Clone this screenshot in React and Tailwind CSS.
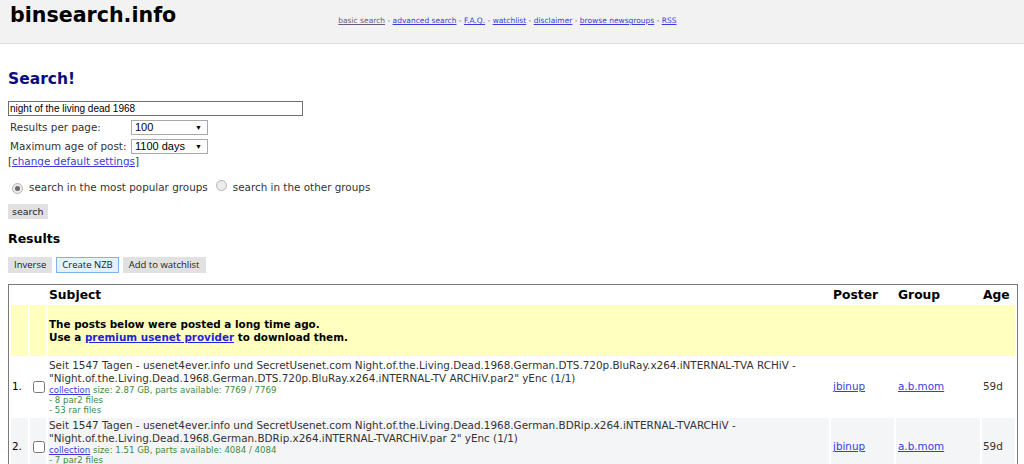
import React from 'react';

const navLinks = ['advanced search', 'F.A.Q.', 'watchlist', 'disclaimer', 'browse newsgroups', 'RSS'];

const results = [
  {
    n: '1.',
    line1: 'Seit 1547 Tagen - usenet4ever.info und SecretUsenet.com Night.of.the.Living.Dead.1968.German.DTS.720p.BluRay.x264.iNTERNAL-TVA RCHiV -',
    line2: '"Night.of.the.Living.Dead.1968.German.DTS.720p.BluRay.x264.iNTERNAL-TV ARCHiV.par2" yEnc (1/1)',
    size: 'size: 2.87 GB, parts available: 7769 / 7769',
    extra: ['- 8 par2 files', '- 53 rar files'],
    bg: 'bg-white',
  },
  {
    n: '2.',
    line1: 'Seit 1547 Tagen - usenet4ever.info und SecretUsenet.com Night.of.the.Living.Dead.1968.German.BDRip.x264.iNTERNAL-TVARCHiV -',
    line2: '"Night.of.the.Living.Dead.1968.German.BDRip.x264.iNTERNAL-TVARCHiV.par 2" yEnc (1/1)',
    size: 'size: 1.51 GB, parts available: 4084 / 4084',
    extra: ['- 7 par2 files', '- 40 rar files'],
    bg: 'bg-[#f4f5f7]',
  },
];

const Radio = ({ checked }) => (
  <span className="inline-flex items-center justify-center w-[11px] h-[11px] rounded-full border border-[#b4b4b4] bg-[#ececec]">
    {checked && <span className="w-[5px] h-[5px] rounded-full bg-[#6a6a6a]" />}
  </span>
);

const Select = ({ value }) => (
  <div className="flex items-center justify-between w-[77px] h-[15px] border border-[#a9a9a9] bg-white pl-[3px] pr-[5px] font-['Liberation_Sans',sans-serif] text-[11px] text-black leading-none">
    <span>{value}</span>
    <span className="text-[7px]">▼</span>
  </div>
);

const GreyButton = ({ children, active }) => (
  <button
    className={
      active
        ? "h-[16px] px-[5px] border border-[#7eb4ea] bg-[#e5f1fb] font-['Open_Sans',sans-serif] text-[9.5px] leading-none text-[#222]"
        : "h-[16px] px-[5px] border border-[#e1e1e1] bg-[#e1e1e1] font-['Open_Sans',sans-serif] text-[9.5px] leading-none text-[#222]"
    }
  >
    {children}
  </button>
);

const App = () => {
  return (
    <div className="w-[1024px] h-[464px] overflow-hidden bg-white font-['DejaVu_Sans',sans-serif] text-[#333]">
      {/* header bar */}
      <div className="flex items-start h-[44px] bg-[#f2f2f2] border-b border-[#dcdcdc]">
        <div className="pl-[10px] pt-[1px] text-[20.6px] font-bold text-black leading-[28px]">binsearch.info</div>
        <div className="ml-[162px] pt-[16px] text-[7.5px] leading-[10px] text-[#555]">
          <a className="underline text-[#6b5b7b]">basic search</a>
          {navLinks.map((l) => (
            <span key={l}>
              {' - '}
              <a className="underline text-[#3b3bdc]">{l}</a>
            </span>
          ))}
        </div>
      </div>

      <div className="px-[8px]">
        <h1 className="mt-[25px] text-[15.5px] font-bold text-[#0a0a80] leading-[20px]">Search!</h1>

        <div className="mt-[12px] w-[295px] h-[15px] border border-[#6f6f6f] pl-[1px] font-['Liberation_Sans',sans-serif] text-[10px] leading-[13px] text-black">
          night of the living dead 1968
        </div>

        <div className="mt-[4px] flex items-center text-[10.4px] leading-[15px]">
          <span className="w-[123px] pl-[2px]">Results per page:</span>
          <Select value="100" />
        </div>
        <div className="mt-[4px] flex items-center text-[10.4px] leading-[15px]">
          <span className="w-[123px] pl-[2px]">Maximum age of post:</span>
          <Select value="1100 days" />
        </div>
        <div className="text-[10.4px] leading-[14px]">
          [<a className="underline text-[#3b3bdc]">change default settings</a>]
        </div>

        <div className="mt-[12px] flex items-center text-[10.4px] leading-[14px]">
          <span className="ml-[4px] mr-[6px]"><Radio checked /></span>
          <span>search in the most popular groups</span>
          <span className="ml-[8px] mr-[6px]"><Radio /></span>
          <span>search in the other groups</span>
        </div>

        <button className="mt-[10px] h-[15px] px-[4px] bg-[#e1e1e1] text-[9.5px] leading-none text-[#222]">search</button>

        <h2 className="mt-[9px] text-[12.5px] font-bold text-black leading-[16px]">Results</h2>

        <div className="mt-[10px] flex gap-[4px]">
          <GreyButton>Inverse</GreyButton>
          <GreyButton active>Create NZB</GreyButton>
          <GreyButton>Add to watchlist</GreyButton>
        </div>

        <table className="mt-[11px] w-[1010px] border border-[#7a7a7a] border-separate border-spacing-[2px] text-[10.4px] leading-[13px]">
          <thead>
            <tr className="text-[12.3px] leading-[16px] font-bold text-black text-left">
              <th className="w-[17px] h-[16px] p-0" />
              <th className="w-[16px] p-0" />
              <th className="p-0 pl-[1px] font-bold">Subject</th>
              <th className="w-[63px] p-0 pl-[2px] font-bold">Poster</th>
              <th className="w-[84px] p-0 pl-[2px] font-bold">Group</th>
              <th className="w-[33px] p-0 pl-[1px] font-bold">Age</th>
            </tr>
          </thead>
          <tbody>
            <tr className="bg-[#ffffc0]">
              <td className="h-[51px]" />
              <td />
              <td colSpan={4} className="pl-[1px] font-bold text-black pt-[2px]">
                The posts below were posted a long time ago.
                <br />
                Use a <a className="underline text-[#2323d8]">premium usenet provider</a> to download them.
              </td>
            </tr>
            {results.map((r) => (
              <tr key={r.n} className={r.bg}>
                <td className="pl-[1px] align-middle text-black">{r.n}</td>
                <td className="align-middle">
                  <input type="checkbox" className="block w-[12px] h-[12px] m-0 ml-[3px]" />
                </td>
                <td className="py-[1px] pl-[1px] align-top">
                  <div>{r.line1}</div>
                  <div>{r.line2}</div>
                  <div className="text-[8.6px] leading-[10px] text-[#3d8a3d]">
                    <a className="underline text-[#3b3bdc]">collection</a> {r.size}
                  </div>
                  {r.extra.map((e) => (
                    <div key={e} className="text-[8.6px] leading-[10px] text-[#3d8a3d]">{e}</div>
                  ))}
                </td>
                <td className="pl-[2px] align-middle">
                  <a className="underline text-[#3b3bdc]">jbinup</a>
                </td>
                <td className="pl-[2px] align-middle">
                  <a className="underline text-[#3b3bdc]">a.b.mom</a>
                </td>
                <td className="pl-[1px] align-middle">59d</td>
              </tr>
            ))}
          </tbody>
        </table>
      </div>
    </div>
  );
};

export default App;
